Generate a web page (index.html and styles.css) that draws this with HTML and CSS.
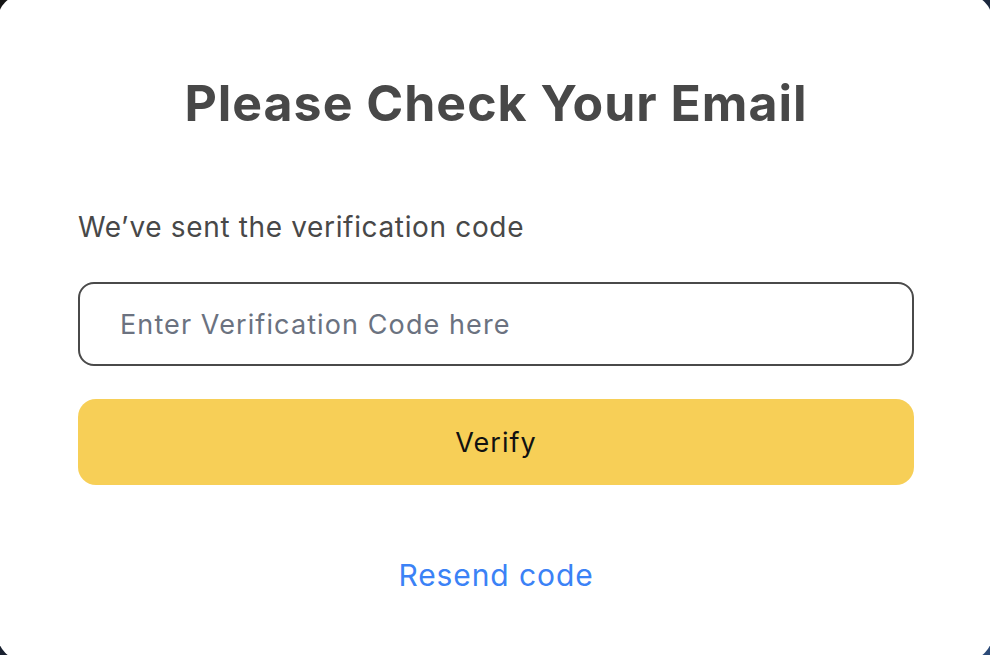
FILE: index.html
```html
<!DOCTYPE html>
<html lang="en">
<head>
  <meta charset="UTF-8">
  <meta name="viewport" content="width=device-width, initial-scale=1.0">
  <title>Verify Email</title>
  <link rel="stylesheet" href="styles.css">
</head>
<body>
  <div class="modal">
    <h1>Please Check Your Email</h1>
    <p class="sent">We’ve sent the verification code to your email</p>
    <input type="text" class="code-input" placeholder="Enter Verification Code here">
    <button class="verify">Verify</button>
    <a href="#" class="resend">Resend code</a>
  </div>
</body>
</html>
```

FILE: styles.css
```css
html, body {
  height: 100%;
}

body {
  margin: 0;
  font-family: 'Inter', 'Open Sans', sans-serif;
  background: linear-gradient(135deg, #141414, #1c2a44 70%, #2b4a78);
  overflow: hidden;
}

.modal {
  background: #fff;
  border-radius: 28px;
  margin: -6px -3px;
  height: 667px;
  box-sizing: border-box;
  padding: 79px 79px 0 81px;
  display: flex;
  flex-direction: column;
}

h1 {
  margin: 0;
  text-align: center;
  font-size: 50px;
  font-weight: 700;
  letter-spacing: 1px;
  color: #484848;
  line-height: 60px;
}

.sent {
  margin: 77px 0 0;
  width: 454px;
  overflow: hidden;
  white-space: nowrap;
  font-size: 28px;
  letter-spacing: 0.65px;
  color: #484848;
  line-height: 34px;
}

.code-input {
  margin-top: 38px;
  height: 84px;
  box-sizing: border-box;
  border: 2px solid #4a4a4a;
  border-radius: 16px;
  padding: 0 40px;
  font-family: inherit;
  font-size: 27px;
  letter-spacing: 1.1px;
  color: #333;
  outline: none;
}

.code-input::placeholder {
  color: #6b7280;
}

.verify {
  margin-top: 33px;
  height: 86px;
  border: none;
  border-radius: 18px;
  background: #f7cf57;
  color: #111;
  font-family: inherit;
  font-size: 27px;
  letter-spacing: 1px;
  cursor: pointer;
}

.resend {
  margin-top: 72px;
  align-self: center;
  color: #3b82f6;
  text-decoration: none;
  font-size: 30px;
  letter-spacing: 0.9px;
  line-height: 36px;
}
```
